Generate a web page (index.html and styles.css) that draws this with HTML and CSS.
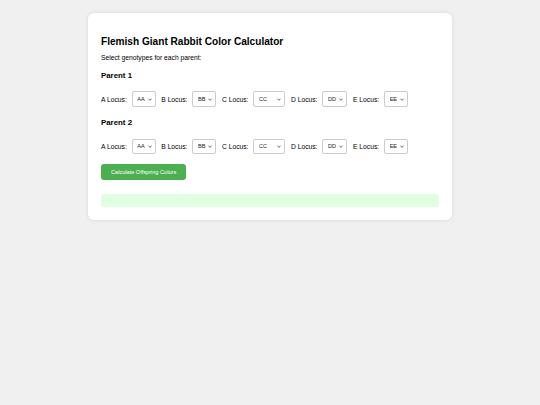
FILE: index.html
```html
<!DOCTYPE html>
<html lang="en">
<head>
    <meta charset="UTF-8">
    <meta name="viewport" content="width=device-width, initial-scale=1.0">
    <title>Flemish Giant Rabbit Color Calculator</title>
    <link rel="stylesheet" href="styles.css">
</head>
<body>
    <div class="container">
        <h2>Flemish Giant Rabbit Color Calculator</h2>
        <p class="intro">Select genotypes for each parent:</p>

        <div class="parents">
            <div class="parent">
                <h3>Parent 1</h3>
                <div class="locus-row">
                    <label for="p1A">A Locus:</label>
                    <select id="p1A">
                        <option>AA</option><option>Aa</option><option>aa</option>
                    </select>
                    <label for="p1B">B Locus:</label>
                    <select id="p1B">
                        <option>BB</option><option>Bb</option><option>bb</option>
                    </select>
                    <label for="p1C">C Locus:</label>
                    <select id="p1C">
                        <option>CC</option><option>Ccchd</option><option>cchdc</option>
                    </select>
                    <label for="p1D">D Locus:</label>
                    <select id="p1D">
                        <option>DD</option><option>Dd</option><option>dd</option>
                    </select>
                    <label for="p1E">E Locus:</label>
                    <select id="p1E">
                        <option>EE</option><option>Ee</option><option>ee</option>
                    </select>
                </div>
            </div>

            <div class="parent">
                <h3>Parent 2</h3>
                <div class="locus-row">
                    <label for="p2A">A Locus:</label>
                    <select id="p2A">
                        <option>AA</option><option>Aa</option><option>aa</option>
                    </select>
                    <label for="p2B">B Locus:</label>
                    <select id="p2B">
                        <option>BB</option><option>Bb</option><option>bb</option>
                    </select>
                    <label for="p2C">C Locus:</label>
                    <select id="p2C">
                        <option>CC</option><option>Ccchd</option><option>cchdc</option>
                    </select>
                    <label for="p2D">D Locus:</label>
                    <select id="p2D">
                        <option>DD</option><option>Dd</option><option>dd</option>
                    </select>
                    <label for="p2E">E Locus:</label>
                    <select id="p2E">
                        <option>EE</option><option>Ee</option><option>ee</option>
                    </select>
                </div>
            </div>
        </div>

        <button class="calc-btn" onclick="calculate()">Calculate Offspring Colors</button>
        <div id="result" class="result"></div>
    </div>

    <script>
        function calculate() {
            const loci = ['A', 'B', 'C', 'D', 'E'];
            const p1 = loci.map(l => document.getElementById('p1' + l).value);
            const p2 = loci.map(l => document.getElementById('p2' + l).value);
            document.getElementById('result').textContent =
                'Parent 1: ' + p1.join(' ') + ' / Parent 2: ' + p2.join(' ');
        }
    </script>
</body>
</html>
```

FILE: styles.css
```css
body {
    font-family: Arial, "Liberation Sans", sans-serif;
    font-size: 6.72px;
    margin: 0;
    padding: 13px 0;
    background-color: #f0f0f0;
    color: #000;
}
.container {
    width: 364px;
    box-sizing: border-box;
    margin: 0 auto;
    padding: 13px;
    background-color: #ffffff;
    border-radius: 6px;
    box-shadow: 0 0 4px rgba(0,0,0,0.1);
}
h2 {
    font-size: 10.1px;
    margin: 9.5px 0 7px;
}
.intro {
    margin: 0 0 10.4px;
}
.parents {
    display: flex;
    flex-direction: column;
    gap: 11.2px;
    margin-bottom: 9.6px;
}
h3 {
    font-size: 7.86px;
    margin: 0 0 11.5px;
}
.locus-row {
    display: flex;
    align-items: center;
}
.locus-row label {
    white-space: nowrap;
    flex-shrink: 0;
    margin-right: 5px;
}
.locus-row select {
    flex-shrink: 0;
    margin-right: 5.5px;
    height: 15.5px;
    box-sizing: border-box;
    font-family: Arial, "Liberation Sans", sans-serif;
    font-size: 5.6px;
    padding: 0 9.5px 0 4.5px;
    border: 1px solid #cccccc;
    border-radius: 2px;
    color: #222;
    -webkit-appearance: none;
    appearance: none;
    background: #ffffff url("data:image/svg+xml,%3Csvg xmlns='http://www.w3.org/2000/svg' viewBox='0 0 8 5'%3E%3Cpath d='M1 1l3 3 3-3' fill='none' stroke='%23333' stroke-width='1.3'/%3E%3C/svg%3E") no-repeat right 3px center / 4px 2.6px;
}
.calc-btn {
    display: block;
    font-family: Arial, "Liberation Sans", sans-serif;
    font-size: 5.6px;
    padding: 5px 10px;
    border: none;
    border-radius: 3px;
    background-color: #4CAF50;
    color: #ffffff;
    cursor: pointer;
}
.result {
    margin-top: 14px;
    padding: 6.7px;
    background-color: #e0ffe0;
    border-radius: 3px;
}
```
